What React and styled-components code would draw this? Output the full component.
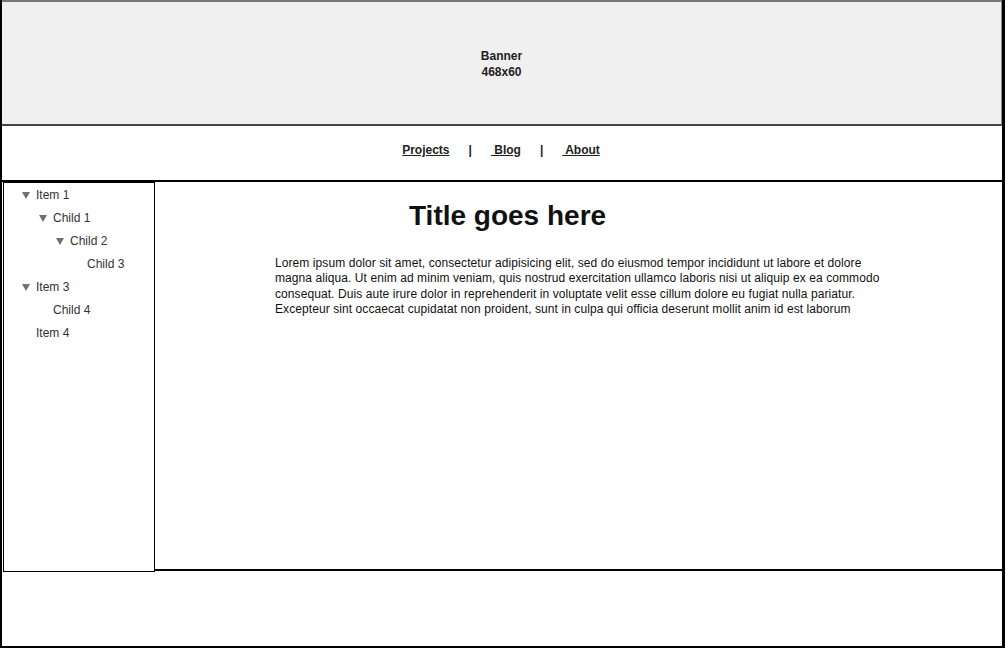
import React from "react";
import styled, { createGlobalStyle } from "styled-components";

const GlobalStyle = createGlobalStyle`
  html, body {
    margin: 0;
    padding: 0;
    background: #ffffff;
  }
  body {
    font-family: "Liberation Sans", Arial, sans-serif;
  }
`;

const Frame = styled.div`
  box-sizing: border-box;
  width: 1005px;
  height: 648px;
  border-left: 2px solid #000;
  border-right: 3px solid #000;
  border-bottom: 2px solid #000;
  display: flex;
  flex-direction: column;
  font-family: "Liberation Sans", Arial, sans-serif;
`;

const Banner = styled.div`
  box-sizing: border-box;
  height: 126px;
  padding-top: 2px;
  background: #f0f0f0;
  border-top: 2px solid #777;
  border-bottom: 2px solid #444;
  border-right: 1px solid #888;
  display: flex;
  flex-direction: column;
  align-items: center;
  justify-content: center;
  font-size: 12px;
  font-weight: bold;
  line-height: 16px;
  color: #222;
`;

const Nav = styled.nav`
  box-sizing: border-box;
  height: 56px;
  border-bottom: 2px solid #000;
  padding-top: 16px;
  padding-right: 2px;
  display: flex;
  justify-content: center;
  align-items: flex-start;
  gap: 19px;
  font-size: 12px;
  font-weight: bold;
  line-height: 16px;
  color: #222;
`;

const NavLink = styled.a`
  color: #222;
  text-decoration: underline;
  white-space: pre;
`;

const Sep = styled.span`
  color: #222;
`;

const Body = styled.div`
  display: flex;
  height: 389px;
`;

const Sidebar = styled.aside`
  box-sizing: border-box;
  flex: 0 0 152px;
  height: 390px;
  margin-left: 1px;
  border: 1px solid #000;
  padding-top: 0;
  position: relative;
  z-index: 1;
`;

const TreeRow = styled.div`
  display: flex;
  align-items: center;
  height: 23px;
  padding-left: ${(p) => 18 + p.$level * 17}px;
  font-size: 12px;
  color: #333;
`;

const Arrow = styled.span`
  width: 0;
  height: 0;
  border-left: 4px solid transparent;
  border-right: 4px solid transparent;
  border-top: 7px solid #707070;
  margin-right: 6px;
  margin-top: 2px;
  visibility: ${(p) => (p.$open ? "visible" : "hidden")};
`;

const Content = styled.main`
  box-sizing: border-box;
  flex: 1;
  border-bottom: 2px solid #000;
  padding-left: 120px;
  padding-top: 18px;
`;

const Title = styled.h1`
  margin: 0 0 0 134px;
  font-size: 28px;
  line-height: 32px;
  font-weight: bold;
  color: #111;
`;

const Text = styled.p`
  margin: 24px 0 0 0;
  width: 608px;
  overflow: hidden;
  white-space: nowrap;
  font-size: 12px;
  line-height: 15.4px;
  letter-spacing: 0.08px;
  color: #111;
`;

const Footer = styled.footer`
  height: 75px;
`;

const tree = [
  { label: "Item 1", level: 0, open: true },
  { label: "Child 1", level: 1, open: true },
  { label: "Child 2", level: 2, open: true },
  { label: "Child 3", level: 3, open: false },
  { label: "Item 3", level: 0, open: true },
  { label: "Child 4", level: 1, open: false },
  { label: "Item 4", level: 0, open: false },
];

const lines = [
  "Lorem ipsum dolor sit amet, consectetur adipisicing elit, sed do eiusmod tempor incididunt ut labore et dolore",
  "magna aliqua. Ut enim ad minim veniam, quis nostrud exercitation ullamco laboris nisi ut aliquip ex ea commodo",
  "consequat. Duis aute irure dolor in reprehenderit in voluptate velit esse cillum dolore eu fugiat nulla pariatur.",
  "Excepteur sint occaecat cupidatat non proident, sunt in culpa qui officia deserunt mollit anim id est laborum",
];

const App = () => {
  return (
    <>
      <GlobalStyle />
      <Frame>
        <Banner>
          <div>Banner</div>
          <div>468x60</div>
        </Banner>
        <Nav>
          <NavLink href="#">Projects</NavLink>
          <Sep>|</Sep>
          <NavLink href="#">{" Blog"}</NavLink>
          <Sep>|</Sep>
          <NavLink href="#">{" About"}</NavLink>
        </Nav>
        <Body>
          <Sidebar>
            {tree.map((item, index) => (
              <TreeRow key={index} $level={item.level}>
                <Arrow $open={item.open} />
                {item.label}
              </TreeRow>
            ))}
          </Sidebar>
          <Content>
            <Title>Title goes here</Title>
            <Text>
              {lines.map((line, i) => (
                <React.Fragment key={i}>
                  {line}
                  {i < lines.length - 1 && <br />}
                </React.Fragment>
              ))}
            </Text>
          </Content>
        </Body>
        <Footer />
      </Frame>
    </>
  );
};

export default App;
